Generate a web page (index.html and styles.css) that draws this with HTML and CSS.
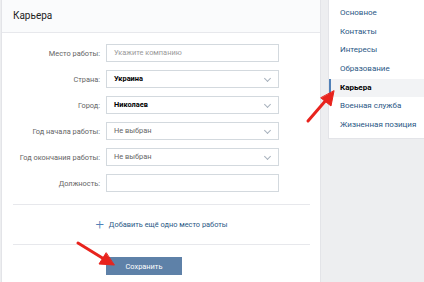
FILE: index.html
```html
<!DOCTYPE html>
<html lang="ru">
<head>
    <meta charset="UTF-8">
    <title>Карьера</title>
    <link rel="stylesheet" href="styles.css">
</head>
<body>
    <div class="page">
        <div class="card">
            <div class="card-header">Карьера</div>
            <div class="form">
                <div class="row">
                    <label class="label">Место работы:</label>
                    <div class="field placeholder">Укажите компанию</div>
                </div>
                <div class="row">
                    <label class="label">Страна:</label>
                    <div class="field select value">Украина<span class="chevron"></span></div>
                </div>
                <div class="row">
                    <label class="label">Город:</label>
                    <div class="field select value">Николаев<span class="chevron"></span></div>
                </div>
                <div class="row">
                    <label class="label">Год начала работы:</label>
                    <div class="field select">Не выбран<span class="chevron"></span></div>
                </div>
                <div class="row">
                    <label class="label">Год окончания работы:</label>
                    <div class="field select">Не выбран<span class="chevron"></span></div>
                </div>
                <div class="row">
                    <label class="label">Должность:</label>
                    <div class="field"></div>
                </div>
            </div>
            <div class="add-row">
                <span class="plus">+</span>
                <a class="add-link">Добавить ещё одно место работы</a>
            </div>
            <div class="actions">
                <button class="save">Сохранить</button>
            </div>
        </div>

        <div class="menu">
            <a class="menu-item">Основное</a>
            <a class="menu-item">Контакты</a>
            <a class="menu-item">Интересы</a>
            <a class="menu-item">Образование</a>
            <a class="menu-item active">Карьера</a>
            <a class="menu-item">Военная служба</a>
            <a class="menu-item">Жизненная позиция</a>
        </div>
    </div>

    <!-- red pointers drawn over the page -->
    <svg class="pointers" width="424" height="282" viewBox="0 0 424 282">
        <g stroke="#e8231d" stroke-width="3" stroke-linecap="round" fill="#e8231d">
            <line x1="78" y1="243" x2="104" y2="259"/>
            <polygon points="114,265 99,264 106,253" stroke-width="1"/>
            <line x1="308" y1="121" x2="327" y2="99"/>
            <polygon points="334,91 331,106 321,98" stroke-width="1"/>
        </g>
    </svg>
</body>
</html>
```

FILE: styles.css
```css
body {
    margin: 0;
    background-color: #edeef0;
    font-family: Roboto, "Open Sans", Arial, sans-serif;
    font-size: 7.4px;
    overflow: hidden;
    width: 424px;
    height: 282px;
}
.page {
    display: flex;
    align-items: flex-start;
    padding-left: 2px;
    gap: 9px;
}
.card {
    width: 318px;
    height: 290px;
    flex-shrink: 0;
    background-color: #fff;
    box-shadow: 0 0 0 1px #e3e4e8;
    padding: 0 10px 0 11px;
    box-sizing: border-box;
}
.card-header {
    margin: 0 -10px 0 -11px;
    height: 32px;
    line-height: 32px;
    padding-left: 11px;
    background-color: #fafbfc;
    border-bottom: 1px solid #e7e8ec;
    font-size: 10px;
    color: #222;
}
.form {
    display: flex;
    flex-direction: column;
    gap: 8px;
    padding: 11px 0 12px;
    border-bottom: 1px solid #e7e8ec;
}
.row {
    display: flex;
    align-items: center;
    gap: 6px;
}
.label {
    width: 87px;
    text-align: right;
    color: #656565;
}
.field {
    position: relative;
    width: 173px;
    height: 18px;
    line-height: 16px;
    box-sizing: border-box;
    border: 1px solid #d3d9de;
    padding-left: 7px;
    color: #656565;
}
.placeholder {
    color: #999;
}
.value {
    color: #000;
    font-weight: bold;
}
.chevron {
    position: absolute;
    right: 8px;
    top: 5px;
    width: 4px;
    height: 4px;
    border-right: 1px solid #a8b2bd;
    border-bottom: 1px solid #a8b2bd;
    transform: rotate(45deg);
}
.add-row {
    display: flex;
    justify-content: center;
    align-items: center;
    gap: 5px;
    height: 39px;
    border-bottom: 1px solid #e7e8ec;
}
.plus {
    font-size: 15px;
    font-weight: 300;
    color: #5181b8;
    line-height: 1;
}
.add-link {
    color: #2a5885;
}
.actions {
    padding: 12px 0 0 93px;
}
.save {
    width: 76px;
    height: 18px;
    border: none;
    background-color: #5e81a8;
    color: #fff;
    font-family: inherit;
    font-size: 7.4px;
    padding: 0;
}
.menu {
    width: 110px;
    flex-shrink: 0;
    background-color: #fff;
    box-shadow: 0 0 0 1px #e3e4e8;
    padding: 4px 0 3px;
    display: flex;
    flex-direction: column;
}
.menu-item {
    height: 18.67px;
    line-height: 18.67px;
    padding-left: 11px;
    color: #2a5885;
    font-size: 8px;
}
.menu-item.active {
    background-color: #f2f3f5;
    border-left: 2px solid #5181b8;
    padding-left: 9px;
    color: #000;
    font-weight: bold;
}
.pointers {
    position: absolute;
    left: 0;
    top: 0;
}
```
